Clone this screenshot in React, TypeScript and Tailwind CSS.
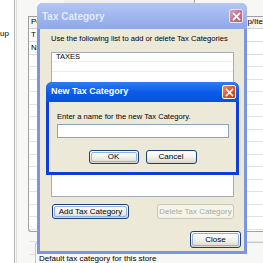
import React from "react";

const font = { fontFamily: '"Liberation Sans", Arial, sans-serif' };

function XPButton({
  label,
  width,
  def,
  disabled,
  h = 15,
}: {
  label: string;
  width: number;
  def?: boolean;
  disabled?: boolean;
  h?: number;
}) {
  if (disabled) {
    return (
      <div
        className="flex items-center justify-center rounded-[3px] border border-[#cbc7b8] bg-[#f5f4ea] text-[8px] text-[#aca899]"
        style={{ width, height: h }}
      >
        {label}
      </div>
    );
  }
  return (
    <div
      className="rounded-[3px] border border-[#1c3f78] bg-gradient-to-b from-white via-[#f3f3ef] to-[#d9d6cc] p-[1px]"
      style={{ width, height: h }}
    >
      <div
        className={
          "flex h-full w-full items-center justify-center rounded-[2px] text-[8px] text-black " +
          (def ? "border border-[#8db2e3]" : "")
        }
      >
        {label}
      </div>
    </div>
  );
}

function CloseBtn({ active }: { active: boolean }) {
  return (
    <div
      className={
        "flex h-[14px] w-[14px] items-center justify-center rounded-[2px] border " +
        (active
          ? "border-white bg-gradient-to-br from-[#f08a6a] via-[#e2552d] to-[#c33c1a]"
          : "border-[#e6e0f0] bg-gradient-to-br from-[#d9a3b3] via-[#c1798e] to-[#a8667c]")
      }
    >
      <svg width="9" height="9" viewBox="0 0 9 9">
        <path d="M1.5 1.5 L7.5 7.5 M7.5 1.5 L1.5 7.5" stroke="white" strokeWidth="1.6" strokeLinecap="square" />
      </svg>
    </div>
  );
}

export default function App() {
  const rows = Array.from({ length: 16 });
  return (
    <div className="relative h-[263px] w-[263px] overflow-hidden bg-white" style={font}>
      {/* background application */}
      <div className="flex h-full w-full">
        <div className="relative h-full w-[14px] shrink-0 bg-white">
          <div className="absolute left-0 top-[28px] text-[8px] text-black">up</div>
        </div>
        <div className="h-full w-[1px] shrink-0 bg-[#b8b8b8]" />
        <div className="h-full w-[1px] shrink-0 bg-[#f6f6f6]" />
        <div className="h-full w-[1px] shrink-0 bg-[#dedede]" />
        <div className="relative flex h-full flex-1 flex-col bg-[#f7f7f5]">
          <div className="ml-[47px] h-[5px] w-[131px] border-b border-r border-[#a8a8a8] bg-[#f0f0f0]" />
          <div className="ml-[11px] mt-[12px] h-[216px] rounded-bl-[3px] border-l border-t border-b border-[#a0a0a0] bg-white">
            <div className="flex h-[12px] items-center border-b border-[#d0d0d0] bg-[#f4f4f0] text-[8px] text-black">
              <span className="pl-[2px]">Pe</span>
              <span className="ml-auto">p/Ite</span>
            </div>
            <div className="flex h-[13px] items-center border-b border-[#dcdcdc] text-[8px] text-black">
              <span className="pl-[2px]">T</span>
            </div>
            <div className="flex h-[13px] items-center border-b border-[#dcdcdc] text-[8px] text-black">
              <span className="pl-[2px]">N</span>
            </div>
            {rows.map((_, i) => (
              <div key={i} className="h-[12.5px] border-b border-[#e4e4e4]" />
            ))}
          </div>
          <div className="ml-[18px] mt-[10px] h-[30px] rounded-tl-[3px] border-l border-t border-[#c8c8c8] bg-[#f7f7f5]" />
          <div className="absolute left-[22px] top-[254px] whitespace-nowrap text-[8px] leading-[9px] text-black">
            Default tax category for this store
          </div>
        </div>
      </div>

      {/* Outer dialog: Tax Category (inactive) */}
      <div className="absolute left-[37px] top-[3px] flex h-[251px] w-[210px] flex-col rounded-t-[6px] border-x-[3px] border-b-[3px] border-[#7b95e6] bg-[#ece9d8]">
        <div className="-mx-[3px] flex h-[26px] shrink-0 items-center rounded-t-[6px] bg-gradient-to-b from-[#b3c6f4] via-[#9fb6ef] to-[#8fa8e8] pl-[5px] pr-[4px]">
          <span className="text-[10px] font-bold text-[#e2eafb]">Tax Category</span>
          <div className="ml-auto">
            <CloseBtn active={false} />
          </div>
        </div>
        <div className="flex flex-1 flex-col pl-[11px]">
          <div className="mt-[5px] h-[10px] whitespace-nowrap text-[7.6px] leading-[10px] text-black">
            Use the following list to add or delete Tax Categories
          </div>
          <div className="mt-[8px] h-[145px] w-[183px] border border-[#a5acb5] bg-white">
            <div className="flex h-[9px] items-center border-b border-[#f0f0f0] pl-[4px] text-[7.5px] text-black">
              TAXES
            </div>
            <div className="h-[10px] border-b border-[#ececec]" />
          </div>
          <div className="mt-[7px] flex h-[15px] w-[183px] items-center">
            <div className="ml-[1px]">
              <XPButton label="Add Tax Category" width={77} def />
            </div>
            <div className="ml-auto">
              <XPButton label="Delete Tax Category" width={77} disabled />
            </div>
          </div>
          <div className="mt-[12px] flex">
            <div className="ml-[139px]">
              <XPButton label="Close" width={51} h={17} def />
            </div>
          </div>
        </div>
      </div>

      {/* Inner dialog: New Tax Category (active) */}
      <div className="absolute left-[46px] top-[82px] flex h-[93px] w-[193px] flex-col rounded-t-[6px] border-x-[3px] border-b-[3px] border-[#0c3fd8] bg-[#ece9d8]">
        <div className="-mx-[3px] flex h-[20px] shrink-0 items-center rounded-t-[6px] bg-gradient-to-b from-[#2f7cf5] via-[#0b5ce8] to-[#0850da] pl-[5px] pr-[3px]">
          <span className="text-[9px] font-bold text-white">New Tax Category</span>
          <div className="ml-auto">
            <CloseBtn active />
          </div>
        </div>
        <div className="flex flex-1 flex-col pl-[8px]">
          <div className="mt-[10px] h-[10px] whitespace-nowrap text-[7.6px] leading-[10px] text-black">
            Enter a name for the new Tax Category.
          </div>
          <div className="mt-[2px] h-[14px] w-[172px] border border-[#8ea3bd] bg-white" />
          <div className="mt-[12px] flex justify-center gap-[7px] pr-[8px]">
            <XPButton label="OK" width={50} h={14} def />
            <XPButton label="Cancel" width={51} h={14} />
          </div>
        </div>
      </div>
    </div>
  );
}
